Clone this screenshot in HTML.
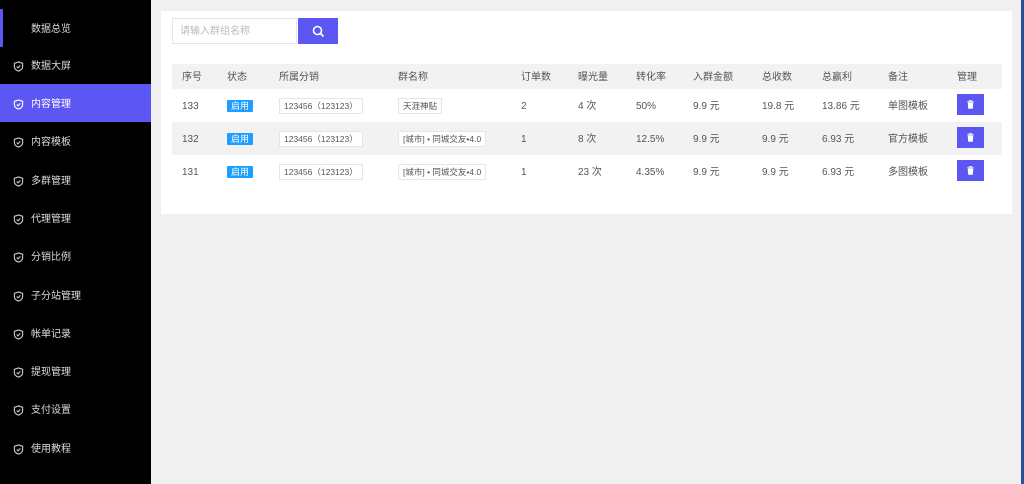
<!DOCTYPE html><html><head><meta charset="utf-8"><style>
*{margin:0;padding:0;box-sizing:border-box}
body{width:1024px;height:484px;background:#f0f0f0;font-family:"Liberation Sans","Noto Sans CJK SC",sans-serif;font-size:10px;color:#555;position:relative;overflow:hidden}
.side{position:absolute;left:0;top:0;width:151px;height:484px;background:#000}
.it{position:absolute;left:0;width:151px;height:38px;color:#ddd;font-size:10px;line-height:42px;padding-left:31px}
.it svg{position:absolute;left:13px;top:15px}
.act{background:#5c57f2;color:#fff}
.card{position:absolute;left:161px;top:11px;width:851px;height:203px;background:#fff}
.inp{position:absolute;left:11px;top:7px;width:125px;height:26px;border:1px solid #e6e6e6;color:#bbb;line-height:26px;padding-left:7px;font-size:10px}
.btn{position:absolute;left:137px;top:7px;width:40px;height:26px;background:#5c57f2}
.row{position:absolute;left:11px;width:830px;height:33px}
.c{position:absolute;top:0;line-height:36px;white-space:nowrap}
.h .c{line-height:27px}
.tag{display:inline-block;background:#1e9fff;color:#fff;font-size:9px;line-height:12px;padding:0 4px;border-radius:1px}
.bx{display:inline-block;border:1px solid #e6e6e6;line-height:14px;padding:0 4px;font-size:8.5px;color:#555}
.del{display:inline-block;width:27px;height:21px;background:#5c57f2;vertical-align:middle;position:relative;top:-2px}
</style></head><body>
<div class="side">
<div style="position:absolute;left:0;top:9px;width:3px;height:38px;background:#5c57f2"></div>
<div class="it" style="top:9px">数据总览</div>
<div class="it" style="top:46px"><svg width="11" height="11" viewBox="0 0 12 12"><path d="M6 1L10.5 2.5V6C10.5 8.5 8.5 10.3 6 11 3.5 10.3 1.5 8.5 1.5 6V2.5Z M4 6L5.5 7.5 8 4.8" fill="none" stroke="#ccc" stroke-width="1.2"/></svg>数据大屏</div>
<div class="it act" style="top:84px"><svg width="11" height="11" viewBox="0 0 12 12"><path d="M6 1L10.5 2.5V6C10.5 8.5 8.5 10.3 6 11 3.5 10.3 1.5 8.5 1.5 6V2.5Z M4 6L5.5 7.5 8 4.8" fill="none" stroke="#fff" stroke-width="1.2"/></svg>内容管理</div>
<div class="it" style="top:122px"><svg width="11" height="11" viewBox="0 0 12 12"><path d="M6 1L10.5 2.5V6C10.5 8.5 8.5 10.3 6 11 3.5 10.3 1.5 8.5 1.5 6V2.5Z M4 6L5.5 7.5 8 4.8" fill="none" stroke="#ccc" stroke-width="1.2"/></svg>内容模板</div>
<div class="it" style="top:161px"><svg width="11" height="11" viewBox="0 0 12 12"><path d="M6 1L10.5 2.5V6C10.5 8.5 8.5 10.3 6 11 3.5 10.3 1.5 8.5 1.5 6V2.5Z M4 6L5.5 7.5 8 4.8" fill="none" stroke="#ccc" stroke-width="1.2"/></svg>多群管理</div>
<div class="it" style="top:199px"><svg width="11" height="11" viewBox="0 0 12 12"><path d="M6 1L10.5 2.5V6C10.5 8.5 8.5 10.3 6 11 3.5 10.3 1.5 8.5 1.5 6V2.5Z M4 6L5.5 7.5 8 4.8" fill="none" stroke="#ccc" stroke-width="1.2"/></svg>代理管理</div>
<div class="it" style="top:237px"><svg width="11" height="11" viewBox="0 0 12 12"><path d="M6 1L10.5 2.5V6C10.5 8.5 8.5 10.3 6 11 3.5 10.3 1.5 8.5 1.5 6V2.5Z M4 6L5.5 7.5 8 4.8" fill="none" stroke="#ccc" stroke-width="1.2"/></svg>分销比例</div>
<div class="it" style="top:276px"><svg width="11" height="11" viewBox="0 0 12 12"><path d="M6 1L10.5 2.5V6C10.5 8.5 8.5 10.3 6 11 3.5 10.3 1.5 8.5 1.5 6V2.5Z M4 6L5.5 7.5 8 4.8" fill="none" stroke="#ccc" stroke-width="1.2"/></svg>子分站管理</div>
<div class="it" style="top:314px"><svg width="11" height="11" viewBox="0 0 12 12"><path d="M6 1L10.5 2.5V6C10.5 8.5 8.5 10.3 6 11 3.5 10.3 1.5 8.5 1.5 6V2.5Z M4 6L5.5 7.5 8 4.8" fill="none" stroke="#ccc" stroke-width="1.2"/></svg>帐单记录</div>
<div class="it" style="top:352px"><svg width="11" height="11" viewBox="0 0 12 12"><path d="M6 1L10.5 2.5V6C10.5 8.5 8.5 10.3 6 11 3.5 10.3 1.5 8.5 1.5 6V2.5Z M4 6L5.5 7.5 8 4.8" fill="none" stroke="#ccc" stroke-width="1.2"/></svg>提现管理</div>
<div class="it" style="top:390px"><svg width="11" height="11" viewBox="0 0 12 12"><path d="M6 1L10.5 2.5V6C10.5 8.5 8.5 10.3 6 11 3.5 10.3 1.5 8.5 1.5 6V2.5Z M4 6L5.5 7.5 8 4.8" fill="none" stroke="#ccc" stroke-width="1.2"/></svg>支付设置</div>
<div class="it" style="top:429px"><svg width="11" height="11" viewBox="0 0 12 12"><path d="M6 1L10.5 2.5V6C10.5 8.5 8.5 10.3 6 11 3.5 10.3 1.5 8.5 1.5 6V2.5Z M4 6L5.5 7.5 8 4.8" fill="none" stroke="#ccc" stroke-width="1.2"/></svg>使用教程</div>
</div>
<div style="position:absolute;left:1021px;top:0;width:3px;height:484px;background:#2a4f9e"></div>
<div class="card">
<div class="inp">请输入群组名称</div>
<div class="btn"><svg style="position:absolute;left:14px;top:7px" width="13" height="13" viewBox="0 0 13 13"><circle cx="5.5" cy="5.5" r="4" fill="none" stroke="#fff" stroke-width="1.6"/><path d="M8.5 8.5L11.5 11.5" stroke="#fff" stroke-width="1.8"/></svg></div>
<div class="row h" style="top:53px;height:25px;background:#f2f2f2">
<span class="c" style="left:10px">序号</span><span class="c" style="left:55px">状态</span><span class="c" style="left:107px">所属分销</span><span class="c" style="left:226px">群名称</span><span class="c" style="left:349px">订单数</span><span class="c" style="left:406px">曝光量</span><span class="c" style="left:464px">转化率</span><span class="c" style="left:521px">入群金额</span><span class="c" style="left:590px">总收数</span><span class="c" style="left:650px">总赢利</span><span class="c" style="left:716px">备注</span><span class="c" style="left:785px">管理</span></div>
<div class="row" style="top:78px">
<span class="c" style="left:10px">133</span><span class="c" style="left:55px"><span class="tag">启用</span></span><span class="c" style="left:107px"><span class="bx">123456（123123）</span></span><span class="c" style="left:226px"><span class="bx">天涯神贴</span></span><span class="c" style="left:349px">2</span><span class="c" style="left:406px">4 次</span><span class="c" style="left:464px">50%</span><span class="c" style="left:521px">9.9 元</span><span class="c" style="left:590px">19.8 元</span><span class="c" style="left:650px">13.86 元</span><span class="c" style="left:716px">单图模板</span><span class="c" style="left:785px"><span class="del"><svg style="position:absolute;left:9px;top:6px" width="9" height="9" viewBox="0 0 9 9"><path d="M1 1.5H8M3 1.5V0.5H6V1.5M2 2.5H7L6.5 8.5H2.5Z" fill="#fff" stroke="#fff" stroke-width=".6"/></svg></span></span></div>
<div class="row" style="top:111px;background:#f2f2f2">
<span class="c" style="left:10px">132</span><span class="c" style="left:55px"><span class="tag">启用</span></span><span class="c" style="left:107px"><span class="bx" style="background:#fff">123456（123123）</span></span><span class="c" style="left:226px"><span class="bx" style="background:#fff">[城市] • 同城交友•4.0</span></span><span class="c" style="left:349px">1</span><span class="c" style="left:406px">8 次</span><span class="c" style="left:464px">12.5%</span><span class="c" style="left:521px">9.9 元</span><span class="c" style="left:590px">9.9 元</span><span class="c" style="left:650px">6.93 元</span><span class="c" style="left:716px">官方模板</span><span class="c" style="left:785px"><span class="del"><svg style="position:absolute;left:9px;top:6px" width="9" height="9" viewBox="0 0 9 9"><path d="M1 1.5H8M3 1.5V0.5H6V1.5M2 2.5H7L6.5 8.5H2.5Z" fill="#fff" stroke="#fff" stroke-width=".6"/></svg></span></span></div>
<div class="row" style="top:144px">
<span class="c" style="left:10px">131</span><span class="c" style="left:55px"><span class="tag">启用</span></span><span class="c" style="left:107px"><span class="bx">123456（123123）</span></span><span class="c" style="left:226px"><span class="bx">[城市] • 同城交友•4.0</span></span><span class="c" style="left:349px">1</span><span class="c" style="left:406px">23 次</span><span class="c" style="left:464px">4.35%</span><span class="c" style="left:521px">9.9 元</span><span class="c" style="left:590px">9.9 元</span><span class="c" style="left:650px">6.93 元</span><span class="c" style="left:716px">多图模板</span><span class="c" style="left:785px"><span class="del"><svg style="position:absolute;left:9px;top:6px" width="9" height="9" viewBox="0 0 9 9"><path d="M1 1.5H8M3 1.5V0.5H6V1.5M2 2.5H7L6.5 8.5H2.5Z" fill="#fff" stroke="#fff" stroke-width=".6"/></svg></span></span></div>
</div>
</body></html>
